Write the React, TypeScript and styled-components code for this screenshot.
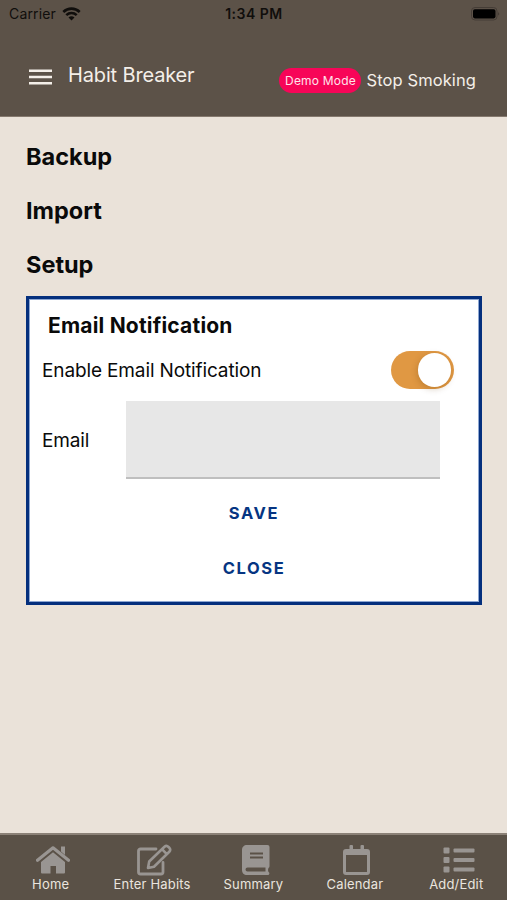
import React, { useState } from "react";
import styled, { createGlobalStyle } from "styled-components";

const GlobalStyle = createGlobalStyle`
  * { box-sizing: border-box; }
  body { margin: 0; font-family: Inter, "Liberation Sans", sans-serif; background: #eae2d9; }
  button, input { font-family: inherit; }
`;

const Screen = styled.div`
  width: 507px;
  height: 900px;
  display: flex;
  flex-direction: column;
  overflow: hidden;
  background: #eae2d9;
  color: #0a0a0a;
`;

const Header = styled.header`
  height: 117px;
  background: #5c5248;
  border-bottom: 1px solid #85796e;
`;

const StatusBar = styled.div`
  height: 28px;
  display: grid;
  grid-template-columns: 1fr 1fr 1fr;
  align-items: center;
  padding: 0 8px 0 9px;
  color: #100e0c;
`;

const Carrier = styled.div`
  display: flex;
  align-items: center;
  gap: 6px;
  font-size: 14px;
  line-height: 26px;
  letter-spacing: 0.16px;
`;

const Clock = styled.div`
  text-align: center;
  font-size: 14px;
  font-weight: 600;
  line-height: 26px;
  letter-spacing: 0.5px;
`;

const BatteryIcon = styled.svg`
  justify-self: end;
  margin-top: -1px;
  margin-right: -1px;
`;

const Toolbar = styled.div`
  height: 88px;
  display: flex;
  align-items: center;
  padding: 10px 31px 0 29px;
  color: #f4efe9;
`;

const MenuButton = styled.button`
  border: 0;
  padding: 0;
  width: 23px;
  height: 18px;
  margin-right: 16px;
  background: none;
  color: inherit;
  display: flex;
`;

const AppTitle = styled.h1`
  margin: -4px auto 0 0;
  font-size: 20px;
  font-weight: 400;
  letter-spacing: -0.15px;
`;

const Badge = styled.span`
  height: 25px;
  width: 82px;
  border-radius: 13px;
  background: #f70558;
  color: #ffe3ea;
  font-size: 12px;
  letter-spacing: 0.2px;
  line-height: 25px;
  text-align: center;
  margin: 7px 5px 0 0;
`;

const HabitName = styled.span`
  margin-top: 6px;
  font-size: 16.5px;
  letter-spacing: 0.1px;
`;

const Content = styled.main`
  flex: 1;
  padding: 13px 25px 0 26px;
`;

const Section = styled.h2`
  margin: 0;
  height: 54px;
  line-height: 54px;
  font-size: 23.5px;
  font-weight: 700;
  letter-spacing: 0;
`;

const Panel = styled.section`
  margin-top: 4px;
  height: 309px;
  background: #fff;
  border: 3px solid #042f7d;
  box-shadow: inset 0 0 0 1px #8ea7d2;
  padding: 14px 0 0 13px;
`;

const PanelTitle = styled.h3`
  margin: 0 0 0 6px;
  font-size: 21px;
  line-height: 25px;
  font-weight: 700;
  letter-spacing: 0.2px;
`;

const Row = styled.label<{ $height: number }>`
  display: flex;
  align-items: center;
  height: ${(p) => p.$height}px;
  font-size: 19px;
  letter-spacing: -0.13px;
`;

const Switch = styled.button<{ $on: boolean }>`
  width: 63px;
  height: 38px;
  margin-left: auto;
  margin-right: 25px;
  padding: 2px 3px;
  border: 0;
  border-radius: 19px;
  display: flex;
  align-items: center;
  justify-content: ${(p) => (p.$on ? "flex-end" : "flex-start")};
  background: ${(p) => (p.$on ? "#e09843" : "#cfcfcf")};
`;

const Thumb = styled.span`
  width: 33.5px;
  height: 33.5px;
  border-radius: 50%;
  background: #fff;
  box-shadow: -1px 2px 6px rgba(100, 60, 0, 0.25);
`;

const EmailLabel = styled.span`
  width: 84px;
`;

const EmailInput = styled.input`
  width: 314px;
  height: 78px;
  margin-bottom: 1px;
  border: 0;
  border-bottom: 2px solid #bfbfbf;
  background: #e7e7e7;
  outline: 0;
  padding: 0 16px;
  font-size: 19px;
`;

const Actions = styled.div`
  display: flex;
  flex-direction: column;
  align-items: center;
  padding: 6px 13px 0 0;
`;

const TextButton = styled.button`
  height: 55px;
  padding: 0;
  border: 0;
  background: none;
  color: #063582;
  font-size: 16.5px;
  font-weight: 700;
  letter-spacing: 1.6px;
`;

const TabBar = styled.nav`
  height: 67px;
  display: grid;
  grid-template-columns: repeat(5, 1fr);
  background: #5a5147;
  border-top: 2px solid #8b8177;
`;

const Tab = styled.button`
  border: 0;
  padding: 8px 0 0;
  background: none;
  display: flex;
  flex-direction: column;
  align-items: center;
  color: #999592;
`;

const TabIcon = styled.span`
  height: 33px;
  padding: 1px 0 0 5px;
  display: flex;
  align-items: center;
  justify-content: center;
`;

const TabLabel = styled.span`
  color: #eae5df;
  font-size: 13px;
  line-height: 16px;
  letter-spacing: 0.18px;
  white-space: nowrap;
`;

const HomeGlyph = () => (
  <svg width="34" height="30" viewBox="0 0 34 30" fill="currentColor">
    <path d="M25 1.500H29V10L25 6.500Z" />
    <path d="M1.500 15.300L17 2.800L32.500 15.300" fill="none" stroke="currentColor" strokeWidth="3.200" strokeLinecap="round" strokeLinejoin="round" />
    <path d="M17 7.300L29 17V27.500A1 1 0 0 1 28 28.500H20V21H14.500V28.500H6A1 1 0 0 1 5 27.500V17Z" />
  </svg>
);

const EditGlyph = () => (
  <svg width="35" height="32" viewBox="0 0 35 32" fill="none" stroke="currentColor" strokeLinejoin="round" strokeLinecap="round">
    <path strokeWidth="2.800" d="M19 5H3.500A2 2 0 0 0 1.500 7V28A2 2 0 0 0 3.500 30H24A2 2 0 0 0 26 28V18.500" />
    <path strokeWidth="2.600" d="M11 24L12.200 17.500L27.500 2.800Q29.500 1 31.500 3L32.500 4Q34 6 32.300 7.800L17 22.800ZM25 5.200L29.800 10.200" />
  </svg>
);

const BookGlyph = () => (
  <svg width="28" height="32" viewBox="0 0 28 32">
    <path fill="currentColor" fillRule="evenodd" d="M5 1H25.500A2 2 0 0 1 27.500 3V22A2 2 0 0 1 26.500 24C25.900 25.500 25.900 26.500 26.500 28A1.600 1.600 0 0 1 26 31H5C2 31 0 29 0 26V6C0 3 2 1 5 1ZM8 8.500H21V10.500H8ZM8 12.500H21V14.500H8ZM5.500 23.500H23.500V27.500H5.500A2 2 0 0 1 5.500 23.500Z" />
  </svg>
);

const CalendarGlyph = () => (
  <svg width="28" height="32" viewBox="0 0 28 32">
    <path fill="currentColor" fillRule="evenodd" d="M6.500 2A1 1 0 0 1 7.500 1H9A1 1 0 0 1 10 2V5H17.500V2A1 1 0 0 1 18.500 1H20A1 1 0 0 1 21 2V5H24A3 3 0 0 1 27 8V28A3 3 0 0 1 24 31H3A3 3 0 0 1 0 28V8A3 3 0 0 1 3 5H6.500ZM3 11V28H24V11Z" />
  </svg>
);

const ListGlyph = () => (
  <svg width="32" height="28" viewBox="0 0 32 28" fill="currentColor">
    {[1.5, 11, 20.5].map((y) => (
      <g key={y}>
        <rect x="0.5" y={y} width="6" height="6" rx="1" />
        <rect x="10.5" y={y + 1} width="21" height="4" rx="1" />
      </g>
    ))}
  </svg>
);

const tabs = [
  { label: "Home", icon: <HomeGlyph /> },
  { label: "Enter Habits", icon: <EditGlyph /> },
  { label: "Summary", icon: <BookGlyph /> },
  { label: "Calendar", icon: <CalendarGlyph /> },
  { label: "Add/Edit", icon: <ListGlyph /> },
];

export default function App() {
  const [enabled, setEnabled] = useState(true);
  return (
    <Screen>
      <GlobalStyle />
      <Header>
        <StatusBar>
          <Carrier>
            Carrier
            <svg width="19" height="14" viewBox="0 0 19 14" fill="none" stroke="currentColor" strokeWidth="2.600">
              <path d="M1.300 5C6 .5 13 .5 17.700 5" />
              <path d="M4.300 8.100C7.300 5.300 11.700 5.300 14.700 8.100" />
              <path d="M9.500 13.500L6.500 10.400C8.200 9 10.800 9 12.500 10.400Z" fill="currentColor" stroke="none" />
            </svg>
          </Carrier>
          <Clock>1:34 PM</Clock>
          <BatteryIcon width="29" height="14" viewBox="0 0 29 14">
            <rect x=".5" y=".5" width="25.500" height="12.500" rx="3.500" fill="none" stroke="#453d36" />
            <rect x="2" y="2.200" width="22.500" height="9.200" rx="1.800" fill="#000" />
            <path d="M27.300 4.700Q29 6.700 27.300 8.800Z" fill="#39332d" />
          </BatteryIcon>
        </StatusBar>
        <Toolbar>
          <MenuButton aria-label="Menu">
            <svg width="23" height="18" viewBox="0 0 23 18" stroke="currentColor" strokeWidth="2.400">
              <path d="M0 2.800H23M0 9H23M0 15.200H23" />
            </svg>
          </MenuButton>
          <AppTitle>Habit Breaker</AppTitle>
          <Badge>Demo Mode</Badge>
          <HabitName>Stop Smoking</HabitName>
        </Toolbar>
      </Header>
      <Content>
        <Section>Backup</Section>
        <Section>Import</Section>
        <Section>Setup</Section>
        <Panel>
          <PanelTitle>Email Notification</PanelTitle>
          <Row $height={64}>
            Enable Email Notification
            <Switch $on={enabled} onClick={() => setEnabled(!enabled)} role="switch" aria-checked={enabled}>
              <Thumb />
            </Switch>
          </Row>
          <Row $height={77}>
            <EmailLabel>Email</EmailLabel>
            <EmailInput type="email" />
          </Row>
          <Actions>
            <TextButton>SAVE</TextButton>
            <TextButton>CLOSE</TextButton>
          </Actions>
        </Panel>
      </Content>
      <TabBar>
        {tabs.map((tab) => (
          <Tab key={tab.label}>
            <TabIcon>{tab.icon}</TabIcon>
            <TabLabel>{tab.label}</TabLabel>
          </Tab>
        ))}
      </TabBar>
    </Screen>
  );
}
